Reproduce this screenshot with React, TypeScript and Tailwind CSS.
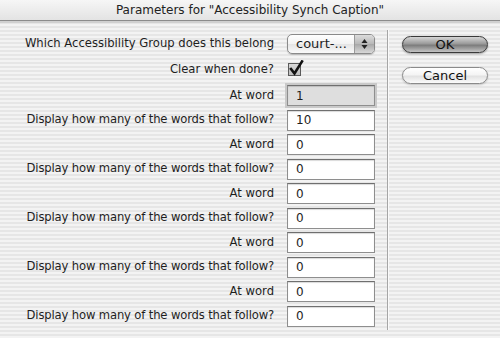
import React from "react";

const font = { fontFamily: '"DejaVu Sans", "Liberation Sans", sans-serif' };

const stripes =
  "bg-[repeating-linear-gradient(180deg,#f3f3f3_0px,#f3f3f3_2px,#e6e6e6_2px,#e6e6e6_4px)]";

const rows: { label: string; value: string; disabled?: boolean }[] = [
  { label: "At word", value: "1", disabled: true },
  { label: "Display how many of the words that follow?", value: "10" },
  { label: "At word", value: "0" },
  { label: "Display how many of the words that follow?", value: "0" },
  { label: "At word", value: "0" },
  { label: "Display how many of the words that follow?", value: "0" },
  { label: "At word", value: "0" },
  { label: "Display how many of the words that follow?", value: "0" },
  { label: "At word", value: "0" },
  { label: "Display how many of the words that follow?", value: "0" },
];

const Label = ({ children, tight }: { children: React.ReactNode; tight?: boolean }) => (
  <div
    className={`w-[274px] shrink-0 text-right text-[11.6px] leading-none text-[#1e1e1e] whitespace-nowrap ${
      tight ? "tracking-[-0.15px]" : ""
    }`}
  >
    {children}
  </div>
);

const Field = ({ value, disabled }: { value: string; disabled?: boolean }) => (
  <div
    className={`ml-[13px] flex h-[21px] w-[88px] items-center border border-[#8e8e8e] border-t-[#6f6f6f] pl-[8px] text-[12px] text-[#1e1e1e] shadow-[inset_0_1px_1px_rgba(0,0,0,0.15)] ${
      disabled ? "bg-[#dedede] outline outline-2 outline-[#c9c9c9]" : "bg-white"
    }`}
  >
    {value}
  </div>
);

const PopupButton = () => (
  <div className="ml-[13px] flex h-[20px] w-[88px] overflow-hidden rounded-[5px] border border-[#8a8a8a] bg-[linear-gradient(180deg,#ffffff,#f2f2f2_50%,#e4e4e4_51%,#fafafa)] shadow-[0_1px_1px_rgba(0,0,0,0.2)]">
    <div className="flex flex-1 items-center pl-[8px] text-[13px] text-[#1e1e1e]">court-...</div>
    <div className="flex w-[20px] items-center justify-center border-l border-[#9a9a9a] bg-[linear-gradient(180deg,#dcdcdc,#b8b8b8_50%,#a8a8a8_51%,#d8d8d8)]">
      <svg width="7" height="12" viewBox="0 0 7 12">
        <path d="M3.5 1 L6.5 5 L0.5 5 Z" fill="#222" />
        <path d="M3.5 11 L6.5 7 L0.5 7 Z" fill="#222" />
      </svg>
    </div>
  </div>
);

const Checkbox = () => (
  <div className="relative ml-[14px] h-[13px] w-[13px] border border-[#5a5a5a] bg-[linear-gradient(180deg,#d8d8d8,#bdbdbd)]">
    <svg className="absolute -left-[1px] -top-[4px]" width="16" height="17" viewBox="0 0 16 17">
      <path d="M3 9 L6.5 13.5 L14 1.5" fill="none" stroke="#111" strokeWidth="2.6" strokeLinecap="square" />
    </svg>
  </div>
);

const AquaButton = ({ label, primary }: { label: string; primary?: boolean }) => (
  <div
    className={`flex h-[17px] w-[86px] items-center justify-center rounded-full border text-[13px] text-[#111] ${
      primary
        ? "border-[#3a3a3a] bg-[linear-gradient(180deg,#d6d6d6,#9a9a9a_45%,#7c7c7c_55%,#c4c4c4)] shadow-[0_1px_2px_rgba(0,0,0,0.35)]"
        : "border-[#8a8a8a] bg-[linear-gradient(180deg,#ffffff,#f4f4f4_45%,#e2e2e2_55%,#fbfbfb)] shadow-[0_1px_2px_rgba(0,0,0,0.2)]"
    }`}
  >
    {label}
  </div>
);

export default function App() {
  return (
    <div className={`h-[338px] w-[500px] overflow-hidden ${stripes}`} style={font}>
      <div className="relative flex h-[21px] items-center justify-center border-b border-[#8c8c8c] bg-[linear-gradient(180deg,#f6f6f6,#e3e3e3)]">
        <span className="text-[12px] text-[#222]">Parameters for "Accessibility Synch Caption"</span>
      </div>
      <div className="h-[2px] bg-[#d0d0d0]" />
      <div className="flex pt-[11px]">
        <div className="flex flex-col">
          <div className="flex h-[20px] items-center">
            <Label>Which Accessibility Group does this belong</Label>
            <PopupButton />
          </div>
          <div className="mt-[4px] flex h-[23px] items-center">
            <Label>Clear when done?</Label>
            <Checkbox />
          </div>
          <div className="mt-[4px] flex flex-col gap-[3.5px]">
            {rows.map((r, i) => (
              <div key={i} className="flex h-[21px] items-center">
                <Label tight={r.label.startsWith("Display")}>{r.label}</Label>
                <Field value={r.value} disabled={r.disabled} />
              </div>
            ))}
          </div>
        </div>
        <div className="ml-[12px] mt-[-4px] h-[300px] w-[2px] border-l border-[#a6a6a6] bg-[#fafafa]" />
        <div className="ml-[13px] flex flex-col gap-[14px] pt-[2px]">
          <AquaButton label="OK" primary />
          <AquaButton label="Cancel" />
        </div>
      </div>
    </div>
  );
}
